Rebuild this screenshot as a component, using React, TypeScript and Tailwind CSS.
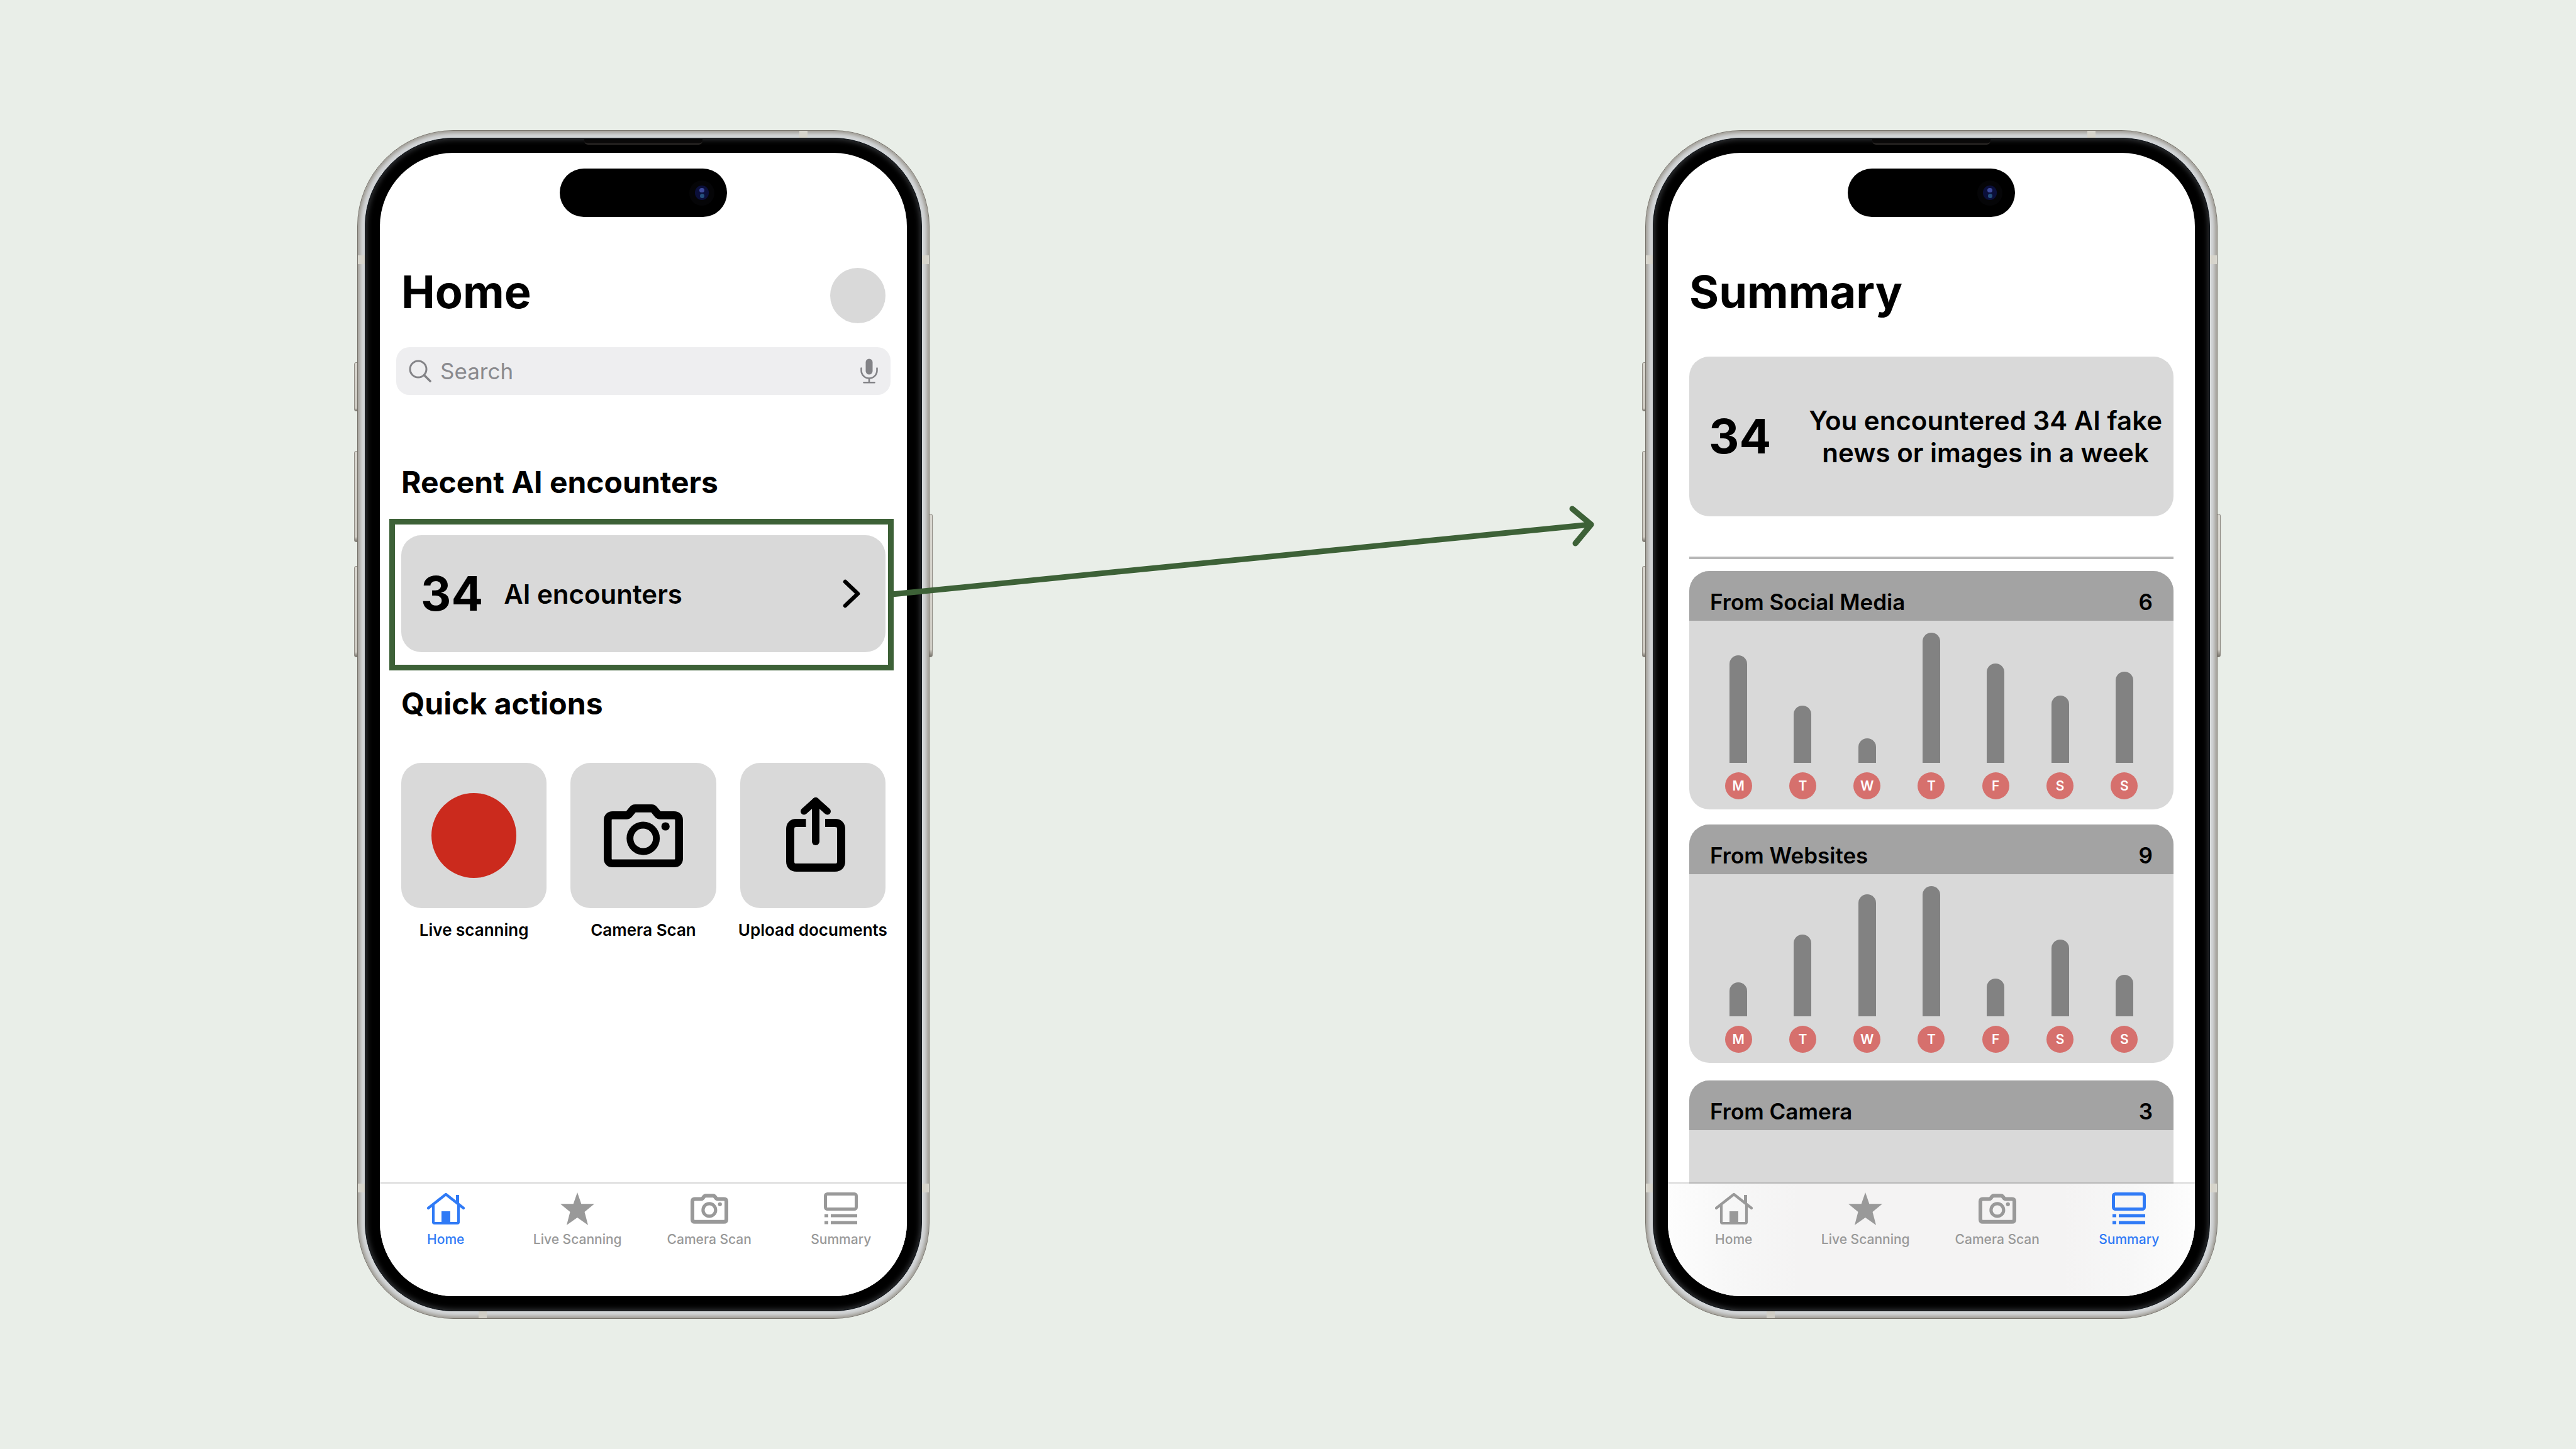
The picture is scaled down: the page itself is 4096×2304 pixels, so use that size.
import type { ReactNode } from "react";

type TabId = "home" | "live" | "camera" | "summary";

function HomeIcon() {
  return (
    <svg viewBox="0 0 60 52" className="h-[52px] w-[60px]" fill="none" stroke="currentColor" strokeWidth="4.2" aria-hidden="true">
      <path d="M2 25 30 3 58 25" strokeLinejoin="round" strokeLinecap="round" />
      <path d="M10 20V47q0 2 2 2H48q2 0 2-2V20" />
      <path d="M48.500 4V17" strokeWidth="5" />
      <rect x="23" y="30" width="14" height="19" fill="currentColor" stroke="none" />
    </svg>
  );
}

function StarIcon() {
  return (
    <svg viewBox="0 0 54 52" className="h-[52px] w-[54px]" fill="currentColor" aria-hidden="true">
      <path d="M27 0 33.300 18.200H54L38.500 31 44 52 27 40 10 52 15.500 31 0 18.200H20.700Z" />
    </svg>
  );
}

function CameraIcon({ className }: { className: string }) {
  return (
    <svg viewBox="0 0 126 100" className={className} fill="none" stroke="currentColor" aria-hidden="true">
      <path
        d="M14.300 17.400H36q2.500 0 4-1.800L46 8.400Q47.600 6.400 50 6.400H76q2.400 0 4 2L86 15.600q1.500 1.800 4 1.800h21.700q8 0 8 8v60.300q0 8-8 8H14.300q-8 0-8-8V25.400q0-8 8-8Z"
        strokeWidth="12.600"
      />
      <circle cx="62.700" cy="54" r="21" strokeWidth="10.800" />
      <circle cx="98.200" cy="35" r="6.600" fill="currentColor" stroke="none" />
    </svg>
  );
}

function SummaryIcon() {
  return (
    <svg viewBox="0 0 54 52" className="h-[52px] w-[54px]" fill="none" stroke="currentColor" strokeWidth="5" aria-hidden="true">
      <rect x="2.500" y="2.500" width="49" height="24" rx="3" />
      <path d="M11 37H53M11 48H53" />
      <path d="M1 37H7M1 48H7" />
    </svg>
  );
}

function ShareIcon() {
  return (
    <svg viewBox="-10 0 104 124" className="h-[124px] w-[104px]" fill="none" stroke="currentColor" strokeWidth="13" aria-hidden="true">
      <path d="M31.500 41.500H16.500q-10 0-10 10v51q0 10 10 10h61q10 0 10-10v-51q0-10-10-10H62" />
      <path d="M47 7V71" strokeWidth="12" strokeLinecap="round" />
      <path d="M28.500 23 47 6.500 65.500 23" strokeWidth="11" strokeLinecap="round" strokeLinejoin="round" />
    </svg>
  );
}

function SearchIcon() {
  return (
    <svg viewBox="0 0 36 36" className="size-[36px] shrink-0" fill="none" stroke="currentColor" strokeWidth="3" strokeLinecap="round" aria-hidden="true">
      <circle cx="15" cy="15" r="13" />
      <path d="M24.500 24.500 34 34" strokeWidth="3.600" />
    </svg>
  );
}

function MicIcon() {
  return (
    <svg viewBox="0 0 28 40" className="h-[40px] w-[28px]" fill="none" stroke="currentColor" strokeWidth="2.600" strokeLinecap="round" aria-hidden="true">
      <rect x="8.500" y="0.500" width="11" height="25" rx="5.500" fill="currentColor" stroke="none" />
      <path d="M1.500 15.500V19a12.500 12.500 0 0 0 25 0V15.500M14 31.500V38M5.500 38.200H22.500" />
    </svg>
  );
}

function ChevronIcon() {
  return (
    <svg viewBox="0 0 28 46" className="h-[46px] w-[28px]" fill="none" stroke="currentColor" strokeWidth="6.500" strokeLinecap="round" strokeLinejoin="round" aria-hidden="true">
      <path d="M4 4 24 23 4 42" />
    </svg>
  );
}

const tabs: { id: TabId; label: string; icon: ReactNode }[] = [
  { id: "home", label: "Home", icon: <HomeIcon /> },
  { id: "live", label: "Live Scanning", icon: <StarIcon /> },
  { id: "camera", label: "Camera Scan", icon: <CameraIcon className="h-[48px] w-[60px]" /> },
  { id: "summary", label: "Summary", icon: <SummaryIcon /> },
];

function TabBar({ active, tinted = false }: { active: TabId; tinted?: boolean }) {
  return (
    <nav
      className={
        "relative -mt-[2px] grid h-[181px] shrink-0 grid-cols-4 items-start border-t-2 border-black/15 bg-clip-padding pt-[12px] " +
        (tinted
          ? "bg-[linear-gradient(to_right,#fdfdfd,#f7f7f7_12%,#f4f3f3_25%,#f4f3f3_75%,#f7f7f7_88%,#fdfdfd)]"
          : "bg-white")
      }
    >
      {tabs.map((tab) => (
        <a
          key={tab.id}
          href={"#" + tab.id}
          aria-current={tab.id === active ? "page" : undefined}
          className={
            "flex flex-col items-center gap-[8px] text-[21px] leading-[26px] font-medium whitespace-nowrap " +
            (tab.id === active ? "text-[#2f7af6]" : "text-[#999999]")
          }
        >
          <span className="flex h-[56px] items-center">{tab.icon}</span>
          {tab.label}
        </a>
      ))}
    </nav>
  );
}

function SideButton({ className }: { className: string }) {
  return (
    <div
      className={
        "absolute w-[6px] border border-[#8f8b83] bg-linear-to-b from-[#d9d7d0] via-[#cfccc4] via-95% to-[#77736b] " + className
      }
    />
  );
}

function Phone({ children }: { children: ReactNode }) {
  return (
    <section className="relative mr-[2px] aspect-[910/1890] w-full max-w-[910px]">
      <SideButton className="top-[369px] -left-[5px] h-[78px] rounded-l-[3px]" />
      <SideButton className="top-[510px] -left-[5px] h-[145px] rounded-l-[3px]" />
      <SideButton className="top-[693px] -left-[5px] h-[145px] rounded-l-[3px]" />
      <SideButton className="top-[610px] -right-[5px] h-[228px] rounded-r-[3px]" />
      <div className="relative h-full rounded-[153px] border border-[#77736b] bg-[#d3d6d8] p-[11px] shadow-[inset_0_0_6px_3px_#98948b]">
        <div className="absolute top-0 right-[193px] h-[11px] w-[13px] bg-[#d6d4cb]" />
        <div className="absolute bottom-0 left-[192px] h-[11px] w-[13px] bg-[#d0cec6]" />
        <div className="absolute top-[198px] left-0 h-[14px] w-[11px] bg-[#d6d4cb]" />
        <div className="absolute top-[198px] right-0 h-[14px] w-[11px] bg-[#d6d4cb]" />
        <div className="absolute bottom-[200px] left-0 h-[14px] w-[11px] bg-[#d6d4cb]" />
        <div className="absolute right-0 bottom-[200px] h-[14px] w-[11px] bg-[#d6d4cb]" />
        <div className="relative h-full rounded-[141px] border border-[#10161c] bg-black p-[23px] shadow-[inset_0_0_8px_2px_#35373a]">
          <div className="absolute top-[1px] left-1/2 h-[9px] w-[188px] -translate-x-1/2 rounded-b-[6px] border-b-2 border-[#2b2826] bg-[#0a0909]" />
          <div className="relative flex h-full flex-col overflow-hidden rounded-[117px] bg-white">
            <div className="absolute top-[25px] left-1/2 flex h-[77px] w-[266px] -translate-x-1/2 items-center justify-end rounded-full bg-black pr-[20px]">
              <div className="flex size-[40px] items-center justify-center rounded-full bg-[#050507]">
                <div className="flex h-[23px] w-[22px] flex-col items-center justify-center gap-[2px] rounded-full bg-[#0b0f3a]">
                  <div className="h-[7px] w-[8px] rounded-full bg-[#3d4a9c]" />
                  <div className="h-[7px] w-[7px] rounded-full bg-[#24507c]" />
                </div>
              </div>
            </div>
            {children}
          </div>
        </div>
      </div>
    </section>
  );
}

function ScreenHeader({ title, children }: { title: string; children?: ReactNode }) {
  return (
    <header className="mt-[183px] flex h-[88px] shrink-0 items-start justify-between px-[34px]">
      <h1 className="text-[72px] leading-[76px] font-bold">{title}</h1>
      {children}
    </header>
  );
}

const actions = [
  { label: "Live scanning", icon: <span className="size-[135px] rounded-full bg-[#cb2a1d]" /> },
  { label: "Camera Scan", icon: <CameraIcon className="h-[100px] w-[126px]" /> },
  { label: "Upload documents", icon: <ShareIcon /> },
];

function HomeScreen() {
  return (
    <Phone>
      <ScreenHeader title="Home">
        <button type="button" aria-label="Profile" className="size-[88px] rounded-full bg-[#d9d9d9]" />
      </ScreenHeader>
      <label className="mx-[26px] mt-[38px] flex h-[76px] shrink-0 items-center gap-[14px] rounded-[21px] bg-[#eeeef0] px-[20px] text-[#838387]">
        <SearchIcon />
        <input
          type="search"
          aria-label="Search"
          placeholder="Search"
          className="min-w-0 flex-1 bg-transparent text-[35px] leading-[44px] outline-none placeholder:text-[#8a8a8e]"
        />
        <MicIcon />
      </label>
      <main className="flex-1 px-[34px]">
        <h2 className="mt-[110px] text-[48px] leading-[58px] font-bold">Recent AI encounters</h2>
        <div className="relative mt-[55px]">
          <button
            type="button"
            className="flex h-[186px] w-full items-center rounded-[32px] bg-[#d9d9d9] pr-[40px] pl-[31px] text-left"
          >
            <span className="text-[75px] leading-[80px] font-bold">34</span>
            <span className="ml-[33px] flex-1 text-[42px] leading-[51px] font-semibold">AI encounters</span>
            <ChevronIcon />
          </button>
          <div className="pointer-events-none absolute -top-[26px] -right-[13px] -bottom-[29px] -left-[19px] border-[9px] border-[#3d6137]" />
        </div>
        <h2 className="mt-[53px] text-[48px] leading-[58px] font-bold">Quick actions</h2>
        <div className="mt-[65px] grid grid-cols-3 gap-[38px]">
          {actions.map((action) => (
            <button key={action.label} type="button" className="flex flex-col items-center gap-[19px]">
              <span className="flex aspect-square w-full items-center justify-center rounded-[32px] bg-[#d9d9d9]">
                {action.icon}
              </span>
              <span className="flex w-0 justify-center text-[26px] leading-[32px] font-semibold whitespace-nowrap">
                {action.label}
              </span>
            </button>
          ))}
        </div>
      </main>
      <TabBar active="home" />
    </Phone>
  );
}

const days = ["M", "T", "W", "T", "F", "S", "S"];

function SourceCard({ title, count, bars }: { title: string; count: number; bars: number[] }) {
  return (
    <article className="shrink-0 overflow-hidden rounded-[32px] bg-[#d9d9d9]">
      <div className="flex h-[79px] items-end justify-between bg-[#a3a3a3] px-[33px] pb-[8px] text-[35px] leading-[44px] font-semibold">
        <h2>{title}</h2>
        <span>{count}</span>
      </div>
      <div className="grid h-[300px] grid-cols-7 px-[27px] pb-[16px]">
        {bars.map((bar, i) => (
          <div key={i} className="flex flex-col items-center justify-end gap-[15px]">
            <div className="w-[28px] rounded-t-[14px] bg-[#828282]" style={{ height: bar }} />
            <span className="flex size-[43px] items-center justify-center rounded-full bg-[#d6706d] text-[21px] leading-[26px] font-semibold text-white">
              {days[i]}
            </span>
          </div>
        ))}
      </div>
    </article>
  );
}

function SummaryScreen() {
  return (
    <Phone>
      <ScreenHeader title="Summary" />
      <main className="flex min-h-0 flex-1 flex-col overflow-hidden px-[34px] pt-[53px]">
        <div className="flex h-[254px] shrink-0 items-center justify-between rounded-[32px] bg-[#d9d9d9] pr-[18px] pl-[31px]">
          <span className="text-[75px] leading-[80px] font-bold">34</span>
          <p className="text-center text-[42px] leading-[51px] font-semibold">
            You encountered 34 AI fake
            <br />
            news or images in a week
          </p>
        </div>
        <hr className="mt-[64px] mb-[19px] h-[4px] shrink-0 border-0 bg-[#b7b7b7]" />
        <SourceCard title="From Social Media" count={6} bars={[171, 91, 39, 207, 158, 107, 145]} />
        <div className="h-[24px] shrink-0" />
        <SourceCard title="From Websites" count={9} bars={[54, 130, 194, 207, 60, 122, 66]} />
        <div className="h-[28px] shrink-0" />
        <SourceCard title="From Camera" count={3} bars={[]} />
      </main>
      <TabBar active="summary" tinted />
    </Phone>
  );
}

export default function App() {
  return (
    <div className="relative grid min-h-screen grid-cols-2 place-items-center bg-[#e9eee8] font-['Inter',sans-serif] text-black">
      <HomeScreen />
      <SummaryScreen />
      <svg
        viewBox="0 0 4096 2304"
        className="pointer-events-none absolute inset-0 h-full w-full"
        fill="none"
        stroke="#3d6137"
        strokeWidth="9"
        aria-hidden="true"
      >
        <path d="M1418 945 2529 834" />
        <path d="M2500 809 2530 834 2505 864" strokeLinecap="round" strokeLinejoin="round" />
      </svg>
    </div>
  );
}
